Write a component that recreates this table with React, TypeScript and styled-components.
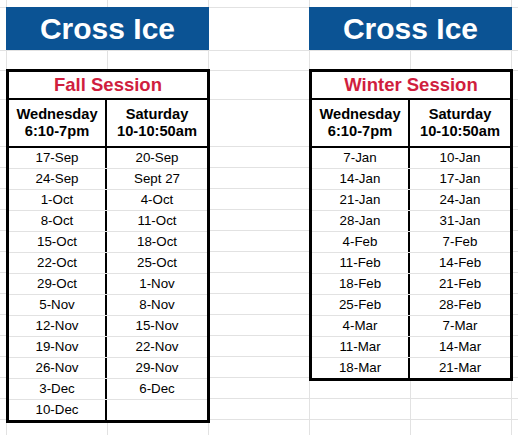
import React from "react";
import styled, { createGlobalStyle } from "styled-components";

const GRID = "#e2e2e2";

const GlobalStyle = createGlobalStyle`
  html, body {
    margin: 0;
    padding: 0;
  }
  body {
    font-family: "Liberation Sans", Arial, sans-serif;
    color: #000;
    background: #fff;
  }
`;

type Session = {
  title: string;
  rows: [string, string][];
};

const sessions: Session[] = [
  {
    title: "Fall Session",
    rows: [
      ["17-Sep", "20-Sep"],
      ["24-Sep", "Sept 27"],
      ["1-Oct", "4-Oct"],
      ["8-Oct", "11-Oct"],
      ["15-Oct", "18-Oct"],
      ["22-Oct", "25-Oct"],
      ["29-Oct", "1-Nov"],
      ["5-Nov", "8-Nov"],
      ["12-Nov", "15-Nov"],
      ["19-Nov", "22-Nov"],
      ["26-Nov", "29-Nov"],
      ["3-Dec", "6-Dec"],
      ["10-Dec", ""],
    ],
  },
  {
    title: "Winter Session",
    rows: [
      ["7-Jan", "10-Jan"],
      ["14-Jan", "17-Jan"],
      ["21-Jan", "24-Jan"],
      ["28-Jan", "31-Jan"],
      ["4-Feb", "7-Feb"],
      ["11-Feb", "14-Feb"],
      ["18-Feb", "21-Feb"],
      ["25-Feb", "28-Feb"],
      ["4-Mar", "7-Mar"],
      ["11-Mar", "14-Mar"],
      ["18-Mar", "21-Mar"],
    ],
  },
];

function Schedule({ session }: { session: Session }) {
  return (
    <Block>
      <Banner>Cross Ice</Banner>
      <Table>
        <SessionTitle>{session.title}</SessionTitle>
        <HeaderRow>
          <HeaderCell>
            Wednesday
            <br />
            6:10-7pm
          </HeaderCell>
          <HeaderCell $divider>
            Saturday
            <br />
            10-10:50am
          </HeaderCell>
        </HeaderRow>
        {session.rows.map(([wed, sat], i) => (
          <DataRow key={i}>
            <DataCell>{wed}</DataCell>
            <DataCell $divider>{sat}</DataCell>
          </DataRow>
        ))}
      </Table>
    </Block>
  );
}

export default function App() {
  return (
    <>
      <GlobalStyle />
      <Sheet>
        {sessions.map((s) => (
          <Schedule key={s.title} session={s} />
        ))}
      </Sheet>
    </>
  );
}

const line = (y: number) =>
  `linear-gradient(${GRID}, ${GRID}) 0 ${y}px / 100% 1px no-repeat`;

const Sheet = styled.div`
  display: flex;
  align-items: flex-start;
  gap: 100px;
  padding: 7px 0 0 6px;
  min-height: 100vh;
  box-sizing: border-box;
  overflow: hidden;
  background: ${line(7)}, ${line(50)}, ${line(70)}, ${line(99)},
    repeating-linear-gradient(
        to bottom,
        ${GRID} 0 1px,
        transparent 1px 21px
      )
      0 146px / 100% 600px no-repeat,
    repeating-linear-gradient(
        to right,
        ${GRID} 0 1px,
        transparent 1px 101px
      )
      6px 0 / 100% 100% no-repeat,
    #fff;
`;

const Block = styled.div`
  display: flex;
  flex-direction: column;
  width: 203px;
  flex-shrink: 0;
`;

const Banner = styled.div`
  height: 43px;
  line-height: 43px;
  background: #0b5394;
  color: #fff;
  font-size: 30px;
  font-weight: 700;
  text-align: center;
`;

const Table = styled.div`
  margin-top: 19px;
  width: 204px;
  box-sizing: border-box;
  border: 3px solid #000;
  background: #fff;
`;

const SessionTitle = styled.div`
  height: 26px;
  line-height: 26px;
  font-size: 18.5px;
  font-weight: 700;
  color: #d01e3e;
  text-align: center;
  border-bottom: 2px solid #000;
`;

const HeaderRow = styled.div`
  display: grid;
  grid-template-columns: 96px 1fr;
  border-bottom: 2px solid #000;
`;

const DataRow = styled.div`
  display: grid;
  grid-template-columns: 96px 1fr;
  border-bottom: 1px solid ${GRID};

  &:last-child {
    border-bottom: none;
  }
`;

const HeaderCell = styled.div<{ $divider?: boolean }>`
  height: 46px;
  display: flex;
  align-items: center;
  justify-content: center;
  text-align: center;
  font-size: 14.67px;
  font-weight: 700;
  line-height: 17px;
  border-left: ${({ $divider }) => ($divider ? "2px solid #000" : "none")};
`;

const DataCell = styled.div<{ $divider?: boolean }>`
  height: 20px;
  line-height: 20px;
  font-size: 13.33px;
  text-align: center;
  white-space: nowrap;
  border-left: ${({ $divider }) => ($divider ? "2px solid #000" : "none")};
`;
